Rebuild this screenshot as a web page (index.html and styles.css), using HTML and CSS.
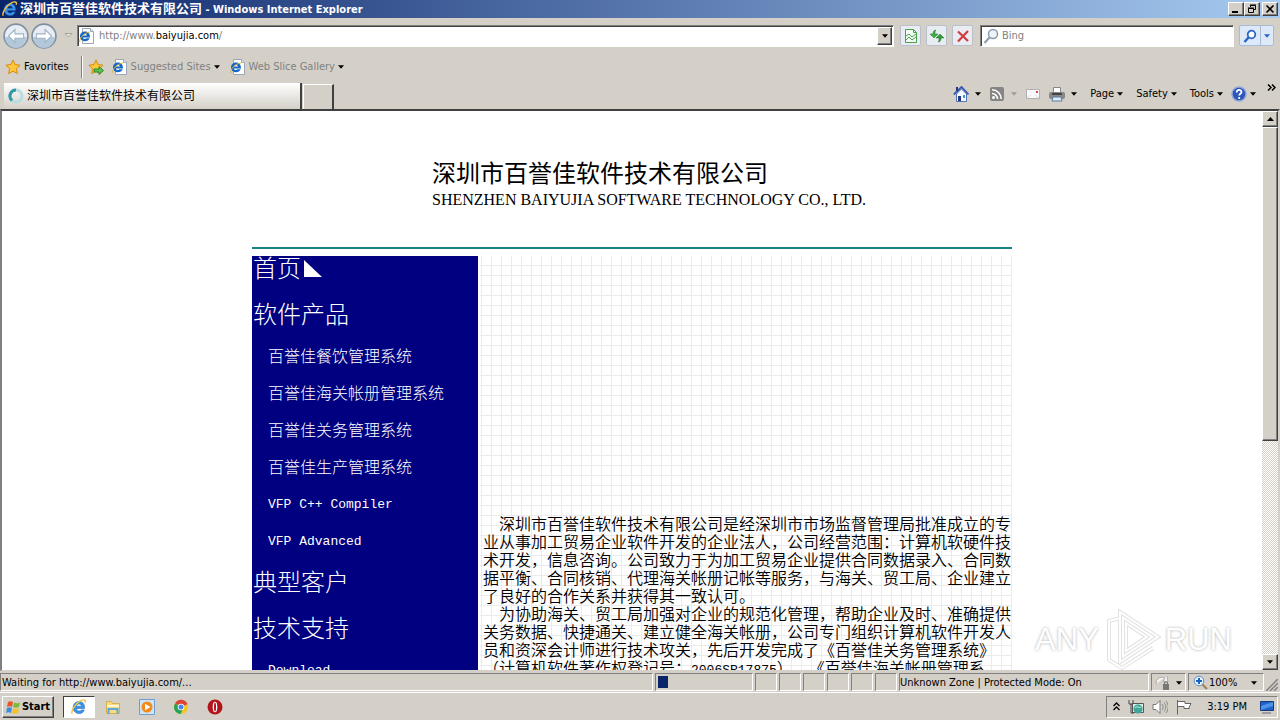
FILE: index.html
```
<!DOCTYPE html>
<html lang="zh-CN">
<head>
    <meta charset="UTF-8">
    <title>深圳市百誉佳软件技术有限公司</title>
    <link rel="stylesheet" href="styles.css">
</head>
<body>
<svg class="defs">
    <symbol id="ie" viewBox="0 0 16 16">
        <path d="M13.6 9.5H5.4c.2 1.700 1.300 2.500 2.700 2.500 1 0 1.800-.4 2.200-1.100h3c-.8 2.200-2.600 3.700-5.200 3.700-3.500 0-6-2.400-6-6s2.600-6.100 6-6.100 5.800 2.500 5.500 7zM5.500 7.200h4.900C10.200 5.800 9.300 5 8 5S5.700 5.800 5.500 7.200z" fill="#3a94ea" stroke="#1c5cb4" stroke-width=".5"/>
        <path d="M1.300 14.800C-.5 12.500 4 5 9 2.200c3.500-2 6.300-1.800 5.200 1.600" fill="none" stroke="#f0c63c" stroke-width="1.400"/>
    </symbol>
    <symbol id="iepage" viewBox="0 0 16 16">
        <path d="M3.500.5h8l3 3v12h-11z" fill="#fff" stroke="#9aa7b8"/>
        <path d="M11.500.5v3h3" fill="#dde5ef" stroke="#9aa7b8"/>
        <path d="M11 9.500H3.900c.2 1.700 2.600 2.200 3.600.8h3.200C9 15 1 14 1 8.500 1 2 11.400 1.500 11 9.500zM4 7.500h4C7.500 5.400 4.600 5.400 4 7.500z" fill="#1668c6"/>
        <path d="M1 14C-.5 11 5 4.500 11 4" fill="none" stroke="#e8b62c"/>
    </symbol>
    <symbol id="star" viewBox="0 0 16 16">
        <path d="M8 1l2.100 4.600 5 .6-3.700 3.400 1 5L8 12.200 3.600 14.600l1-5L.9 6.200l5-.6z" fill="#ffc83a" stroke="#d98a12"/>
    </symbol>
    <symbol id="down" viewBox="0 0 7 4">
        <path d="M0 0h7L3.500 4z" fill="currentColor"/>
    </symbol>
</svg>
<div class="window">
    <div class="titlebar">
        <svg class="icon"><use href="#ie"/></svg>
        <span class="title"><span class="han">深圳市百誉佳软件技术有限公司</span> - Windows Internet Explorer</span>
        <button class="winbtn" aria-label="Minimize"><svg width="10" height="10"><path d="M1 8h6" stroke="#000" stroke-width="2"/></svg></button>
        <button class="winbtn" aria-label="Restore"><svg width="10" height="10"><path d="M3.500 3V1.500h5v4H7M3 1h6M1.500 4.500h5v4h-5zM1 4h6" fill="none" stroke="#000"/></svg></button>
        <button class="winbtn close" aria-label="Close"><svg width="10" height="10"><path d="M1.500 1.500l7 7m0-7l-7 7" stroke="#000" stroke-width="1.600"/></svg></button>
    </div>

    <div class="navbar">
        <button class="round" aria-label="Back"><svg viewBox="0 0 24 24"><circle cx="12" cy="12" r="11" fill="#e8edf4" stroke="#7f8fa3" stroke-width="1.500"/><path d="M2 13a10 10 0 0 0 20 0z" fill="#b4c8dc"/><path d="M11 6l-6 6 6 6v-4h8v-4h-8z" fill="#fff" stroke="#9fb3c7"/></svg></button>
        <button class="round" aria-label="Forward"><svg viewBox="0 0 24 24"><circle cx="12" cy="12" r="11" fill="#e8edf4" stroke="#7f8fa3" stroke-width="1.500"/><path d="M2 13a10 10 0 0 0 20 0z" fill="#b4c8dc"/><path d="M13 6l6 6-6 6v-4H5v-4h8z" fill="#fff" stroke="#9fb3c7"/></svg></button>
        <button class="recent" aria-label="Recent pages"><svg width="9" height="5" viewBox="0 0 9 5"><path d="M1 .5h7L4.500 4z" fill="#e8e4de" stroke="#a7a39b"/></svg></button>
        <div class="address">
            <svg class="icon"><use href="#iepage"/></svg>
            <div class="url" role="textbox" aria-label="Address" contenteditable="true" spellcheck="false">http://www.<b>baiyujia.com</b>/</div>
            <button class="drop" aria-label="Show addresses"><svg class="arrow"><use href="#down"/></svg></button>
        </div>
        <button class="tool" aria-label="Compatibility view"><svg width="14" height="16"><path d="M1.500 1.500h8l3 3v10h-11z" fill="#f4fbf4" stroke="#4aa04a"/><path d="M9.500 1.500v3h3M2 8l3-2 3 3 4-3M2 12l3-3 3 3 4-3" fill="none" stroke="#4aa04a"/></svg></button>
        <button class="tool" aria-label="Refresh"><svg width="16" height="16"><path d="M7 2C4.500 2 4 4 4 6H1l4 4 4-4H6c0-2 0-3 1-4z" fill="#3fae49" stroke="#207a2a" stroke-width=".5"/><path d="M9 14c2.500 0 3-2 3-4h3l-4-4-4 4h3c0 2 0 3-1 4z" fill="#2f9a3a" stroke="#207a2a" stroke-width=".5"/></svg></button>
        <button class="tool" aria-label="Stop"><svg width="14" height="14"><path d="M2 2.500l10 9.500M12 2L2 12.500" stroke="#d23c3c" stroke-width="2.200"/></svg></button>
        <div class="search">
            <svg class="icon"><circle cx="10" cy="6" r="4.500" fill="#eef4fa" stroke="#8c9bab" stroke-width="1.500"/><path d="M6.500 9.500L1.500 15" stroke="#8c9bab" stroke-width="2"/></svg>
            <input type="text" placeholder="Bing" aria-label="Search">
        </div>
        <div class="go">
            <button aria-label="Search"><svg width="14" height="14"><circle cx="8.500" cy="5.500" r="3.800" fill="#fff" stroke="#2a62c8" stroke-width="1.800"/><path d="M5.500 8.500L1.500 13" stroke="#2a62c8" stroke-width="2.400"/></svg></button>
            <button class="more" aria-label="Search options"><svg class="arrow"><use href="#down"/></svg></button>
        </div>
    </div>

    <div class="favbar">
        <button class="flat"><svg class="icon"><use href="#star"/></svg>Favorites</button>
        <span class="sep"></span>
        <button class="flat" aria-label="Add to favorites bar"><svg class="icon"><use href="#star"/><path d="M6 10h5V7.500l4.500 4-4.500 4V13H6z" fill="#5cc04a" stroke="#2f8a2a"/></svg></button>
        <button class="flat grey"><svg class="icon"><use href="#iepage"/></svg>Suggested Sites<svg class="arrow"><use href="#down"/></svg></button>
        <button class="flat grey slice"><svg class="icon"><use href="#iepage"/></svg>Web Slice Gallery<svg class="arrow"><use href="#down"/></svg></button>
    </div>

    <div class="tabs">
        <button class="tab">
            <svg class="icon"><circle cx="8" cy="8" r="6" fill="none" stroke="#b8dde0" stroke-width="3"/><path d="M8 2a6 6 0 0 0-4 10.500" fill="none" stroke="#2f9aa5" stroke-width="3"/></svg>
            深圳市百誉佳软件技术有限公司
        </button>
        <button class="newtab" aria-label="New tab"></button>
        <div class="commands">
            <button class="flat" aria-label="Home"><svg class="icon"><path d="M3.500 8v7.500h10V8L8.500 3z" fill="#f4f7fd" stroke="#5272b8"/><path d="M.8 8.500L8.500 1l7 7.500" fill="none" stroke="#3559ad" stroke-width="1.800"/><path d="M3 1h2v4H3z" fill="#24397d"/><path d="M5 10h3v5H5z" fill="#24397d"/><path d="M10 9h2v3h-2z" fill="#3a9ad9"/></svg><svg class="arrow"><use href="#down"/></svg></button>
            <button class="flat dim" aria-label="Feeds"><svg class="icon"><rect x="1" y="1" width="14" height="14" rx="2" fill="#858585"/><circle cx="4.500" cy="11.500" r="1.500" fill="#fff"/><path d="M3 7.500a5.500 5.500 0 0 1 5.500 5.500M3 3.800A9.200 9.200 0 0 1 12.200 13" fill="none" stroke="#fff" stroke-width="1.600"/></svg><svg class="arrow"><use href="#down"/></svg></button>
            <button class="flat" aria-label="Read mail"><svg class="icon"><path d="M1.500 3.500h13v9h-13z" fill="#fafafa" stroke="#b4aeb4"/><path d="M2 12l4-3M14 12l-4-3" stroke="#ddd"/><path d="M11 5h2v2h-2z" fill="#d44"/></svg></button>
            <button class="flat" aria-label="Print"><svg class="icon"><path d="M4.500 1.500h7v5h-7z" fill="#fff" stroke="#888"/><rect y="6" width="16" height="7" rx="2" fill="#888"/><path d="M3 8h10" stroke="#444" stroke-width="2"/><path d="M4 11h8l1 4H3z" fill="#dfeaf7" stroke="#5a7ba8"/></svg><svg class="arrow"><use href="#down"/></svg></button>
            <button class="flat word">Page<svg class="arrow"><use href="#down"/></svg></button>
            <button class="flat word">Safety<svg class="arrow"><use href="#down"/></svg></button>
            <button class="flat word">Tools<svg class="arrow"><use href="#down"/></svg></button>
            <button class="flat help" aria-label="Help"><svg class="icon"><circle cx="8" cy="8" r="7" fill="#2c56b8" stroke="#8fa6d8" stroke-width="1.500"/><path d="M5.700 6.500c0-3.400 4.800-3.200 4.800-.4 0 1.700-2.300 1.700-2.300 3.500M8.200 11v2" fill="none" stroke="#fff" stroke-width="1.800"/></svg><svg class="arrow"><use href="#down"/></svg></button>
        </div>
        <button class="chevron" aria-label="More commands"><svg width="9" height="7"><path d="M1 .5l3 3-3 3M5 .5l3 3-3 3" fill="none" stroke="#000" stroke-width="1.500"/></svg></button>
    </div>

    <div class="view">
        <div class="page">
            <div class="sheet">
                <div class="header">
                    <h1>深圳市百誉佳软件技术有限公司</h1>
                    <p>SHENZHEN BAIYUJIA SOFTWARE TECHNOLOGY CO., LTD.</p>
                </div>
                <div class="columns">
                    <ul class="menu">
                        <li><a href="#">首页<svg width="18" height="17"><path d="M0 0v17h18z" fill="#fff"/></svg></a></li>
                        <li><a href="#">软件产品</a></li>
                        <li class="sub"><a href="#">百誉佳餐饮管理系统</a></li>
                        <li class="sub"><a href="#">百誉佳海关帐册管理系统</a></li>
                        <li class="sub"><a href="#">百誉佳关务管理系统</a></li>
                        <li class="sub"><a href="#">百誉佳生产管理系统</a></li>
                        <li class="sub"><a href="#" class="latin">VFP C++ Compiler</a></li>
                        <li class="sub"><a href="#" class="latin">VFP Advanced</a></li>
                        <li><a href="#">典型客户</a></li>
                        <li><a href="#">技术支持</a></li>
                        <li class="sub"><a href="#" class="latin">Download</a></li>
                    </ul>
                    <div class="content">
                        <p>深圳市百誉佳软件技术有限公司是经深圳市市场监督管理局批准成立的专<br>业从事加工贸易企业软件开发的企业法人，公司经营范围：计算机软硬件技<br>术开发，信息咨询。公司致力于为加工贸易企业提供合同数据录入、合同数<br>据平衡、合同核销、代理海关帐册记帐等服务，与海关、贸工局、企业建立<br>了良好的合作关系并获得其一致认可。</p>
                        <p>为协助海关、贸工局加强对企业的规范化管理，帮助企业及时、准确提供<br>关务数据、快捷通关、建立健全海关帐册，公司专门组织计算机软件开发人<br>员和资深会计师进行技术攻关，先后开发完成了《百誉佳关务管理系统》<br>（计算机软件著作权登记号：<span class="latin">2006SR17875</span>）、《百誉佳海关帐册管理系</p>
                    </div>
                </div>
            </div>
        </div>
        <div class="scroll">
            <button aria-label="Scroll up"><svg width="7" height="4"><path d="M0 4h7L3.500 0z"/></svg></button>
            <div class="thumb"></div>
            <div class="track"></div>
            <button aria-label="Scroll down"><svg class="arrow"><use href="#down"/></svg></button>
        </div>
        <div class="watermark">
            <span>ANY</span>
            <svg width="58" height="62" viewBox="0 0 58 62"><path d="M17 3v50l38-25zM23 14v28l21-14zM17 9L6 12v39l13 8 31-20" fill="none" stroke="#e2e2e2" stroke-width="4"/><path d="M17 3v50l38-25zM23 14v28l21-14zM17 9L6 12v39l13 8 31-20" fill="none" stroke="#fff" stroke-width="2"/></svg>
            <span>RUN</span>
        </div>
    </div>

    <div class="status">
        <span class="pane wait">Waiting for http://www.baiyujia.com/...</span>
        <span class="pane progress"><i></i></span>
        <span class="pane small"></span>
        <span class="pane small"></span>
        <span class="pane small"></span>
        <span class="pane small"></span>
        <span class="pane small"></span>
        <span class="pane small"></span>
        <span class="pane zone">Unknown Zone | Protected Mode: On</span>
        <button class="pane lock" aria-label="Privacy"><svg class="icon"><path d="M1 9a6 6 0 0 1 9-6l-2 3 5 1-1-6" fill="#f2f2f2" stroke="#aaa"/><path d="M8 9h6v6H8z" fill="#777"/><path d="M9.500 9V7h3v2" fill="none" stroke="#777"/></svg><svg class="arrow"><use href="#down"/></svg></button>
        <button class="pane percent"><svg class="icon"><circle cx="6" cy="6" r="4.800" fill="#e6f1fc" stroke="#5d8fc7"/><path d="M6 3v6M3 6h6" stroke="#1b62c4" stroke-width="2"/><path d="M9.500 9.500l4.500 4.500" stroke="#a0845c" stroke-width="2.200"/></svg>100%<svg class="arrow"><use href="#down"/></svg></button>
        <svg class="grip" width="12" height="12"><path d="M0 12L12 0M4 12l8-8M8 12l4-4" stroke="#808080" stroke-width="1.500"/></svg>
    </div>

    <div class="taskbar">
        <button class="start"><svg class="icon"><path d="M2 3c2-1 3-1 5 0L6 8c-2-1-3-1-5 0z" fill="#e8562a"/><path d="M8 3.500c2 1 4 1 6 0L13 8c-2 1-4 1-6 0z" fill="#7cbb3b"/><path d="M1 9c2-1 3-1 5 0l-1 5c-2-1-3-1-5 0z" fill="#3c8edb"/><path d="M7 9.300c2 1 4 1 6 0L12 14c-2 1-4 1-6 0z" fill="#f6c12c"/></svg>Start</button>
        <button class="task active" aria-label="Internet Explorer"><svg class="icon"><use href="#ie"/></svg></button>
        <button class="task" aria-label="Explorer"><svg class="icon"><path d="M1.500 2.500h5l1 2h7v10h-13z" fill="#f5dc82" stroke="#d6b04c"/><path d="M2 7h12" stroke="#fff6cf" stroke-width="2"/><path d="M3.500 15v-5h9v5" fill="none" stroke="#5aa9d8" stroke-width="2"/></svg></button>
        <button class="task" aria-label="Media Player"><svg class="icon"><path d="M.5.5h15v15H.5z" fill="#cfe3f6" stroke="#6f9fce"/><circle cx="8" cy="8" r="5.500" fill="#f28a1c"/><path d="M6 4.800v6.400L11.500 8z" fill="#fff"/></svg></button>
        <button class="task" aria-label="Chrome"><svg class="icon"><circle cx="8" cy="8" r="7" fill="#f3c623"/><path d="M8 8L2 4.300a7 7 0 0 1 12.600 1z" fill="#dc4437"/><path d="M2 4.400A7 7 0 0 0 7.600 15L10 9.500 8 8z" fill="#27a25a"/><circle cx="8" cy="8" r="3.300" fill="#fff"/><circle cx="8" cy="8" r="2.500" fill="#4a86e8"/></svg></button>
        <button class="task" aria-label="Opera"><svg class="icon"><circle cx="8" cy="8" r="7.500" fill="#b3141c"/><ellipse cx="8" cy="8" rx="2.300" ry="5.300" fill="#fff"/><ellipse cx="8" cy="8" rx="1" ry="4.500" fill="#b3141c"/></svg></button>
        <div class="tray">
            <svg class="up" width="7" height="9"><path d="M.5 4l3-3 3 3M.5 8l3-3 3 3" fill="none" stroke="#000" stroke-width="1.300"/></svg>
            <svg class="icon"><path d="M4.500 4.500h11v9h-11z" fill="#d7ebe6" stroke="#555"/><circle cx="10" cy="10" r="4.500" fill="#3fa597"/><path d="M7 9c2-3 4 1 6-1" stroke="#c8f0dc" fill="none"/><path d="M1 1v4h4V1M3 5v9h3" fill="none" stroke="#444"/></svg>
            <svg class="icon"><path d="M1 5.500h3l4-4v13l-4-4H1z" fill="#fff" stroke="#777"/><path d="M10 5c1.500 2 1.500 4 0 6M12 3.500c2.500 3 2.500 6 0 9M14 2c3 4 3 8 0 12" fill="none" stroke="#888"/></svg>
            <svg class="icon"><path d="M1.500 1v14.500M2 2.500h7v2h6l-2 4 .5 1H8v-2H2" fill="#fff" stroke="#666"/></svg>
            <span class="clock">3:19 PM</span>
            <svg class="icon"><path d="M1.500 2.500h13v9h-13z" fill="#1f62c9" stroke="#123a80"/><path d="M2 7l12-4v4L2 11z" fill="#4b94ea"/><path d="M3 14h9" stroke="#667"/></svg>
        </div>
    </div>
</div>
</body>
</html>
```
FILE: styles.css
```
* {
    margin: 0;
    padding: 0;
    box-sizing: border-box;
}

body {
    font: 11px/14px "DejaVu Sans Condensed", "Noto Sans CJK SC", sans-serif;
    color: #000;
    background: #d4d0c8;
    overflow: hidden;
}

button {
    font: inherit;
    color: inherit;
    border: none;
    background: none;
    display: flex;
    align-items: center;
    justify-content: center;
}

ul {
    list-style: none;
}

a {
    color: inherit;
    text-decoration: none;
}

.defs {
    display: none;
}

.icon {
    width: 16px;
    height: 16px;
    flex: none;
}

.arrow {
    width: 6px;
    height: 4px;
    flex: none;
}

.window {
    display: flex;
    flex-direction: column;
    height: 100vh;
}

/* 标题栏 */
.titlebar {
    display: flex;
    align-items: center;
    height: 18px;
    padding: 0 2px;
    color: #fff;
    background: linear-gradient(90deg, #0a246a, #a6caf0);
}

.title {
    flex: 1;
    padding-left: 2px;
    font-weight: bold;
    white-space: nowrap;
}

.han {
    font-size: 13px;
}

.winbtn, .scroll button, .drop, .start {
    background: #d4d0c8;
    border: 1px solid;
    border-color: #fff #404040 #404040 #fff;
    box-shadow: inset -1px -1px #808080;
}

.winbtn {
    width: 16px;
    height: 14px;
}

.close {
    margin-left: 2px;
}

/* 地址栏 */
.navbar {
    display: flex;
    align-items: center;
    height: 35px;
    padding: 0 6px 0 3px;
}

.round {
    width: 26px;
    height: 26px;
    margin-right: 2px;
}

.recent {
    width: 18px;
}

.address, .search {
    display: flex;
    align-items: center;
    height: 22px;
    background: #fff;
    border: 1px solid;
    border-color: #808080 #fff #fff #808080;
    box-shadow: inset 1px 1px #404040;
}

.address {
    flex: 1;
    padding: 1px 1px 0 1px;
}

.url {
    flex: 1;
    padding-left: 4px;
    color: #808080;
    outline: none;
}

.url b {
    font-weight: normal;
    color: #000;
}

.drop {
    width: 15px;
    height: 18px;
}

.tool {
    width: 21px;
    height: 21px;
    margin-left: 5px;
    background: #e9ecf2;
    border: 1px solid #b9c0cc;
    border-radius: 2px;
}

.address + .tool {
    margin-left: 6px;
}

.search {
    width: 254px;
    margin: 0 5px 0 7px;
    padding-left: 2px;
}

.search input {
    flex: 1;
    min-width: 0;
    padding-left: 3px;
    font: inherit;
    border: none;
    outline: none;
    background: none;
}

.search input::placeholder {
    color: #808080;
}

.go {
    display: flex;
    height: 21px;
    background: #dde9f8;
    border: 1px solid #a9bcd6;
    border-radius: 2px;
}

.go button {
    width: 20px;
}

.go .more {
    width: 13px;
    color: #2a62c8;
    border-left: 1px solid #a9bcd6;
}

/* 收藏夹栏 */
.favbar {
    display: flex;
    align-items: center;
    height: 28px;
    padding-left: 5px;
}

.flat {
    gap: 3px;
    white-space: nowrap;
}

.grey {
    margin-left: 8px;
    color: #808080;
}

.grey .arrow {
    color: #000;
}

.slice {
    margin-left: 10px;
}

.sep {
    width: 2px;
    height: 22px;
    margin: 0 5px 0 12px;
    border-left: 1px solid #808080;
    border-right: 1px solid #fff;
}

/* 标签 */
.tabs {
    display: flex;
    align-items: flex-end;
    height: 28px;
    padding: 0 4px;
}

.tab {
    width: 298px;
    height: 26px;
    padding-left: 4px;
    gap: 3px;
    justify-content: flex-start;
    font-size: 12px;
    background: linear-gradient(#fff, #d4d0c8);
    border-right: 2px solid #404040;
}

.newtab {
    width: 31px;
    height: 25px;
    margin-left: 1px;
    border: 1px solid #fff;
    border-right: 2px solid #404040;
    border-bottom: none;
}

.commands {
    display: flex;
    align-items: center;
    gap: 8px;
    height: 28px;
    margin-left: auto;
    padding-bottom: 2px;
}

.commands .icon {
    margin-right: 3px;
}

.commands .icon:last-child {
    margin-right: 0;
}

.commands .help .icon {
    margin-right: 0;
}

.word {
    margin-left: 5px;
}

.dim .arrow {
    color: #a09c94;
}

.chevron {
    align-self: flex-start;
    height: 12px;
    margin-left: 11px;
}

/* 网页 */
.view {
    display: flex;
    flex: 1;
    min-height: 0;
    position: relative;
    background: #fff;
    border: 2px solid #404040;
    border-left-color: #808080;
    border-right-color: #d4d0c8;
    border-bottom: 1px solid #d4d0c8;
}

.page {
    flex: 1;
    overflow: hidden;
    font: 16px/18px "Noto Sans CJK SC", sans-serif;
    font-weight: 350;
    text-spacing-trim: space-all;
}

.sheet {
    width: 760px;
    margin: 0 auto;
}

.header {
    height: 138px;
    margin-bottom: 7px;
    padding: 47px 0 0 180px;
    border-bottom: 2px solid #1b8080;
}

.header h1 {
    font-size: 24px;
    line-height: 28px;
    font-weight: normal;
}

.header p {
    font: 16px/28px "Liberation Serif", serif;
    white-space: nowrap;
}

.columns {
    display: flex;
}

.menu {
    width: 226px;
    padding-left: 1px;
    color: #fff;
    font-weight: 350;
    background: #000080;
}

.menu li {
    padding: 12px 0;
    font-size: 24px;
    font-weight: 300;
    line-height: 22px;
}

.menu li:first-child {
    padding-top: 0;
}

.menu a {
    display: block;
}

.menu svg {
    margin-left: 3px;
}

.menu .sub {
    padding: 10px 0 8px 15px;
    font-size: 16px;
    line-height: 19px;
}

.latin {
    font-family: "Liberation Mono", monospace;
    font-size: 13px;
    line-height: 1;
}

.menu .latin {
    line-height: 22px;
    margin-bottom: -3px;
}

.content {
    flex: 1;
    margin-left: 2px;
    padding: 258px 0 0 3px;
    background: linear-gradient(90deg, transparent 9px, #ebebeb 9px) 2px 0 / 10px 10px,
                linear-gradient(transparent 9px, #ebebeb 9px) 0 0 / 10px 10px;
    white-space: nowrap;
}

.content p {
    text-indent: 16px;
}

.scroll {
    display: flex;
    flex-direction: column;
    width: 16px;
}

.scroll button {
    height: 16px;
}

.thumb {
    height: 314px;
    background: #d4d0c8;
    border: 1px solid;
    border-color: #fff #404040 #404040 #fff;
    box-shadow: inset -1px -1px #808080;
}

.track {
    flex: 1;
    background: repeating-conic-gradient(#fff 0 25%, #d4d0c8 0 50%) 0 0 / 2px 2px;
}

.watermark {
    display: flex;
    align-items: center;
    gap: 4px;
    position: absolute;
    right: 46px;
    bottom: -1px;
    font: 31px/62px "Liberation Sans", sans-serif;
    color: #fff;
    text-shadow: 0 0 3px #aaa;
}

/* 状态栏 */
.status {
    display: flex;
    gap: 2px;
    height: 22px;
    padding: 2px 2px 1px 0;
    border-bottom: 1px solid #fff;
}

.pane {
    display: flex;
    align-items: center;
    justify-content: flex-start;
    padding-top: 2px;
    border: 1px solid;
    border-color: #808080 #fff #fff #808080;
    white-space: nowrap;
}

.wait {
    flex: 1;
    padding-left: 1px;
}

.progress {
    width: 98px;
    padding: 0 0 0 2px;
}

.progress i {
    width: 10px;
    height: 12px;
    background: #0a246a;
}

.small {
    width: 22px;
}

.zone {
    width: 250px;
    padding-left: 0;
}

.lock {
    width: 35px;
    padding-left: 3px;
    gap: 5px;
}

.percent {
    width: 76px;
    padding-left: 4px;
}

.percent .arrow {
    margin-left: 14px;
}

.grip {
    align-self: flex-end;
}

/* 任务栏 */
.taskbar {
    display: flex;
    align-items: center;
    height: 27px;
    padding: 0 2px;
}

.start {
    width: 52px;
    height: 22px;
    margin-right: 9px;
    font-weight: bold;
}

.task {
    width: 32px;
    height: 22px;
    margin-right: 2px;
}

.active {
    background: #fff;
    border: 1px solid;
    border-color: #404040 #fff #fff #404040;
}

.tray {
    display: flex;
    align-items: center;
    gap: 8px;
    height: 22px;
    margin-left: auto;
    padding: 0 2px 0 6px;
    border: 1px solid;
    border-color: #808080 #fff #fff #808080;
}

.clock {
    padding: 0 4px 0 7px;
}
```
